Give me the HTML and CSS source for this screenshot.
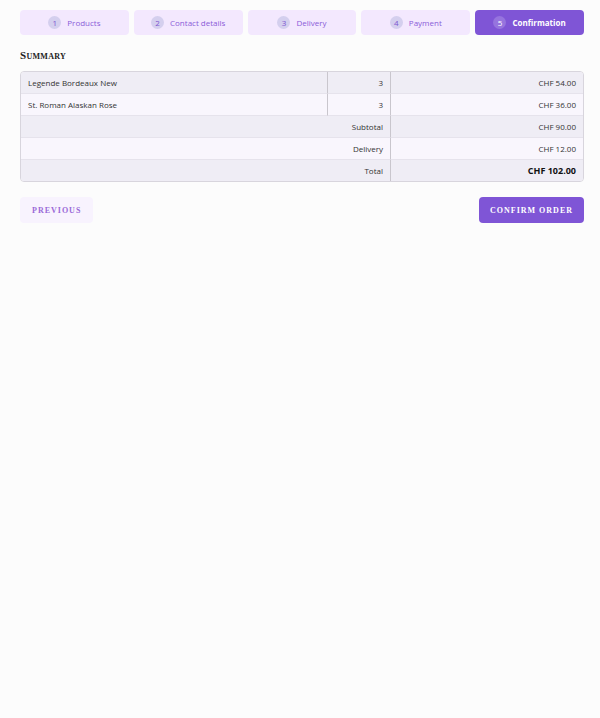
FILE: index.html
```html
<!DOCTYPE html>
<html lang="en">
<head>
    <meta charset="UTF-8">
    <meta name="viewport" content="width=device-width, initial-scale=1.0">
    <title>Checkout - Confirmation</title>
    <link rel="stylesheet" href="styles.css">
</head>
<body>
    <div class="container">
        <!-- Steps -->
        <div class="steps">
            <div class="step"><span class="step-num">1</span>Products</div>
            <div class="step"><span class="step-num">2</span>Contact details</div>
            <div class="step"><span class="step-num">3</span>Delivery</div>
            <div class="step"><span class="step-num">4</span>Payment</div>
            <div class="step active"><span class="step-num">5</span>Confirmation</div>
        </div>

        <h2 class="title">Summary</h2>

        <!-- Summary table -->
        <table class="summary">
            <tr class="odd">
                <td>Legende Bordeaux New</td>
                <td class="num qty">3</td>
                <td class="num">CHF 54.00</td>
            </tr>
            <tr class="even">
                <td>St. Roman Alaskan Rose</td>
                <td class="num qty">3</td>
                <td class="num">CHF 36.00</td>
            </tr>
            <tr class="odd">
                <td colspan="2" class="num">Subtotal</td>
                <td class="num">CHF 90.00</td>
            </tr>
            <tr class="even">
                <td colspan="2" class="num">Delivery</td>
                <td class="num">CHF 12.00</td>
            </tr>
            <tr class="odd">
                <td colspan="2" class="num">Total</td>
                <td class="num total">CHF 102.00</td>
            </tr>
        </table>

        <div class="actions">
            <button class="btn btn-prev">Previous</button>
            <button class="btn btn-confirm">Confirm order</button>
        </div>
    </div>
</body>
</html>
```

FILE: styles.css
```css
body {
    font-family: "Open Sans", Arial, sans-serif;
    background-color: #fcfcfc;
    margin: 0;
    padding: 0;
}

.container {
    padding: 10px 16px 0 20px;
}

/* Steps */
.steps {
    display: grid;
    grid-template-columns: repeat(5, 1fr);
    gap: 5px;
}

.step {
    display: flex;
    align-items: center;
    justify-content: center;
    height: 25px;
    background: #f3e8fe;
    border-radius: 4px;
    color: #8a5cd8;
    font-size: 8px;
}

.step-num {
    display: inline-flex;
    align-items: center;
    justify-content: center;
    width: 13px;
    height: 13px;
    border-radius: 50%;
    background: #d4cfee;
    color: #7d55d0;
    margin-right: 6px;
    font-size: 8px;
}

.step.active {
    background: #7f55d6;
    color: #fff;
    font-weight: bold;
}

.step.active .step-num {
    background: #9674de;
    color: #fff;
    font-weight: normal;
}

/* Title */
.title {
    font-family: "Liberation Serif", "Times New Roman", serif;
    font-variant: small-caps;
    font-size: 11px;
    font-weight: bold;
    color: #222;
    margin: 14px 0 10px;
    letter-spacing: 0.3px;
}

/* Table */
.summary {
    width: 100%;
    border-collapse: separate;
    border-spacing: 0;
    border: 1px solid #d8d5dd;
    border-radius: 4px;
    overflow: hidden;
    font-size: 8px;
    color: #333;
}

.summary td {
    height: 21px;
    padding: 0 7px;
    border-bottom: 1px solid #e6e3ec;
    color: #333;
}

.summary tr:last-child td {
    border-bottom: none;
}

.summary td:first-child {
    width: 292px;
}

.summary td:nth-last-child(2) {
    border-right: 1px solid #c9c6cd;
}

.summary td.qty {
    width: 48px;
    border-left: 1px solid #c9c6cd;
}

.odd td {
    background: #efedf5;
}

.even td {
    background: #f9f6fd;
}

.num {
    text-align: right;
}

.summary td.total {
    font-weight: bold;
    font-size: 9px;
    color: #111;
}

/* Buttons */
.actions {
    display: flex;
    justify-content: space-between;
    margin-top: 15px;
}

.btn {
    font-family: "Liberation Serif", "Times New Roman", serif;
    text-transform: uppercase;
    letter-spacing: 1px;
    font-size: 8px;
    font-weight: bold;
    height: 26px;
    border: none;
    border-radius: 4px;
    cursor: pointer;
}

.btn-prev {
    background: #f8f3fe;
    color: #9a6ad8;
    padding: 0 12px;
}

.btn-confirm {
    background: #7f55d6;
    color: #fff;
    padding: 0 11px;
}
```
